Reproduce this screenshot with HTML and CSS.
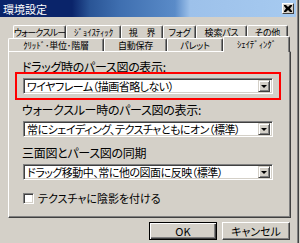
FILE: index.html
```html
<!DOCTYPE html>
<html lang="ja">
<head>
<meta charset="utf-8">
<link rel="stylesheet" href="styles.css">
</head>
<body>
<div class="window">
  <div class="titlebar">
    <span class="title">環境設定</span>
    <span class="close"><svg width="8" height="7" viewBox="0 0 8 7"><path d="M0 0h2l2 2 2-2h2v1L6 3.5 8 6v1H6L4 5 2 7H0V6l2-2.5L0 1z" fill="#000"/></svg></span>
  </div>
  <div class="tabs">
    <div class="row back">
      <div class="tab t1">ウォークスルー</div>
      <div class="tab t2">ｼﾞｮｲｽﾃｨｯｸ</div>
      <div class="tab t3">視　界</div>
      <div class="tab t4">フォグ</div>
      <div class="tab t5">検索パス</div>
      <div class="tab t6">その他</div>
    </div>
    <div class="row front">
      <div class="tab f1">ｸﾘｯﾄﾞ･単位･階層</div>
      <div class="tab f2">自動保存</div>
      <div class="tab f3">パレット</div>
      <div class="tab f4 selected">ｼｪｲﾃﾞｨﾝｸﾞ</div>
    </div>
  </div>
  <div class="panel">
    <div class="group">
      <div class="label">ドラッグ時のパース図の表示:</div>
      <div class="combo-wrap">
        <div class="combo"><span class="value">ワイヤフレーム（描画省略しない）</span><span class="drop"><i class="arrow"></i></span></div>
        <div class="mark"></div>
      </div>
    </div>
    <div class="group">
      <div class="label">ウォークスルー時のパース図の表示:</div>
      <div class="combo"><span class="value">常にシェイディング、テクスチャともにオン（標準）</span><span class="drop"><i class="arrow"></i></span></div>
    </div>
    <div class="group">
      <div class="label">三面図とパース図の同期</div>
      <div class="combo"><span class="value">ドラッグ移動中、常に他の図面に反映（標準）</span><span class="drop"><i class="arrow"></i></span></div>
    </div>
    <div class="check"><span class="box"></span><span>テクスチャに陰影を付ける</span></div>
  </div>
  <div class="buttons">
    <div class="btn default">OK</div>
    <div class="btn">キャンセル</div>
  </div>
</div>
</body>
</html>
```
FILE: styles.css
```css
* { box-sizing: border-box; }
html, body { margin: 0; padding: 0; }
body {
  width: 300px;
  height: 243px;
  overflow: hidden;
  background: #d4d0c8;
  font-family: "Noto Sans CJK JP", "Noto Sans", sans-serif;
  font-size: 12px;
  font-feature-settings: "palt";
  line-height: 12px;
  color: #000;
}
.window {
  width: 299px;
  height: 243px;
  background: #d4d0c8;
  border-right: 1px solid #404040;
  box-shadow: inset -1px 0 #808080;
  display: flex;
  flex-direction: column;
}
.titlebar {
  height: 17px;
  margin: 0 2px 0 0;
  display: flex;
  align-items: center;
  justify-content: space-between;
  padding: 0 2px 0 3px;
  background: linear-gradient(to right, #0a246a 0, #0a246a 72px, #2a5596 90px, #3f6fb0 120px, #5a8bc8 175px, #9dc1ea 190px, #a6caf0 100%);
}
.title { color: #fff; font-size: 11px; }
.close {
  width: 12px;
  height: 11px;
  background: #d4d0c8;
  border-top: 1px solid #fff;
  border-left: 1px solid #fff;
  border-right: 1px solid #404040;
  border-bottom: 1px solid #404040;
  display: flex;
  align-items: center;
  justify-content: center;
}
.tabs {
  margin-top: 8px;
  display: flex;
  flex-direction: column;
}
.row { display: flex; height: 13px; }
.row.back { margin-left: 13px; }
.row.front { margin-left: 8px; }
.tab {
  height: 13px;
  display: flex;
  align-items: center;
  justify-content: center;
  font-size: 9px;
  line-height: 9px;
  letter-spacing: -0.2px;
  border-top: 1px solid #fff;
  border-left: 1px solid #fff;
  border-right: 1px solid #404040;
  box-shadow: inset -1px 0 #808080;
  border-top-left-radius: 2px;
  border-top-right-radius: 2px;
  white-space: nowrap;
  overflow: hidden;
}
.t1 { width: 53px; letter-spacing: -0.8px; }
.t2 { width: 55px; }
.t3 { width: 42px; }
.t4 { width: 33px; }
.t5 { width: 51px; }
.t6 { width: 41px; }
.f1 { width: 96px; }
.f2 { width: 63px; }
.f3 { width: 56px; }
.f4 { width: 67px; }
.tab.selected {
  height: 16px;
  margin-top: -2px;
  padding-bottom: 1px;
  position: relative;
  z-index: 2;
  background: #d4d0c8;
}
.panel {
  margin-left: 8px;
  width: 283px;
  height: 167px;
  border-top: 1px solid #fff;
  border-left: 1px solid #fff;
  border-right: 1px solid #404040;
  border-bottom: 1px solid #404040;
  box-shadow: inset -1px -1px #808080;
  padding: 9px 16px 0 14px;
  display: flex;
  flex-direction: column;
}
.group { display: flex; flex-direction: column; margin-bottom: 10px; }
.label { margin-left: -1px; height: 12px; margin-bottom: 5px; letter-spacing: -0.3px; }
.combo-wrap { position: relative; }
.mark {
  position: absolute;
  left: -8px;
  top: -6px;
  right: -7px;
  bottom: -6px;
  border: 2px solid #ff0000;
}
.combo {
  width: 250px;
  height: 16px;
  background: #fff;
  border-top: 1px solid #808080;
  border-left: 1px solid #808080;
  border-right: 1px solid #fff;
  border-bottom: 1px solid #fff;
  box-shadow: inset 1px 1px #404040, inset -1px -1px #d4d0c8;
  display: flex;
  align-items: center;
  justify-content: space-between;
  padding: 0 2px 0 3px;
}
.value { white-space: nowrap; font-size: 11px; letter-spacing: -0.5px; }
.drop {
  flex: none;
  width: 12px;
  height: 12px;
  background: #d4d0c8;
  border-top: 1px solid #d4d0c8;
  border-left: 1px solid #d4d0c8;
  border-right: 1px solid #404040;
  border-bottom: 1px solid #404040;
  box-shadow: inset 1px 1px #fff, inset -1px -1px #808080;
  display: flex;
  align-items: center;
  justify-content: center;
}
.arrow {
  width: 0;
  height: 0;
  border-left: 3px solid transparent;
  border-right: 3px solid transparent;
  border-top: 3px solid #000;
}
.check {
  display: flex;
  align-items: center;
  gap: 4px;
  margin-top: 2px;
  font-size: 11px;
}
.box {
  width: 11px;
  height: 11px;
  background: #fff;
  border-top: 1px solid #808080;
  border-left: 1px solid #808080;
  border-right: 1px solid #fff;
  border-bottom: 1px solid #fff;
  box-shadow: inset 1px 1px #404040, inset -1px -1px #d4d0c8;
}
.buttons {
  display: flex;
  justify-content: flex-end;
  gap: 5px;
  margin-top: 4px;
  padding-right: 8px;
}
.btn {
  width: 68px;
  height: 18px;
  display: flex;
  align-items: center;
  justify-content: center;
  font-size: 11px;
  border-top: 1px solid #fff;
  border-left: 1px solid #fff;
  border-right: 1px solid #404040;
  border-bottom: 1px solid #404040;
  box-shadow: inset -1px -1px #808080;
}
.btn.default {
  border: 1px solid #000;
  box-shadow: inset 1px 1px #fff, inset -1px -1px #404040, inset -2px -2px #808080;
}
```
